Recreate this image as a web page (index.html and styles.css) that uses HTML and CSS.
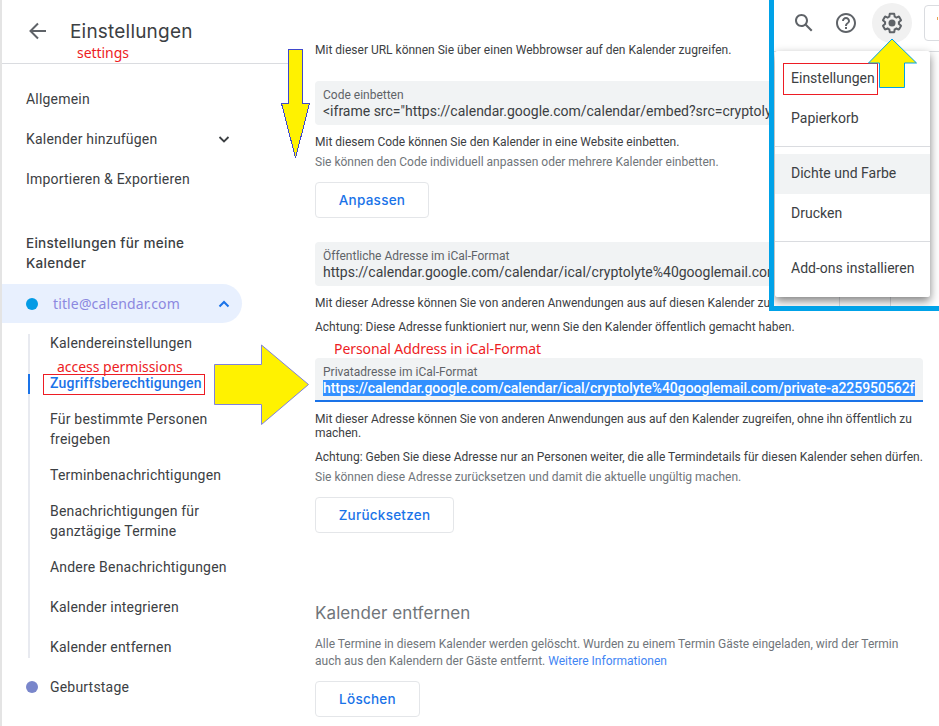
FILE: index.html
```html
<!DOCTYPE html>
<html lang="de">
<head>
<meta charset="utf-8">
<title>Einstellungen</title>
<link rel="stylesheet" href="styles.css">
</head>
<body>
<div class="app">
  <aside class="sidebar">
    <header class="top">
      <svg class="back" width="18" height="18" viewBox="0 0 18 18"><path d="M17 9H2M9 1.500L1.500 9L9 16.500" fill="none" stroke="#5f6368" stroke-width="2"/></svg>
      <div class="titles"><h1>Einstellungen</h1><span class="note settings">settings</span></div>
    </header>
    <nav>
      <a class="item">Allgemein</a>
      <a class="item">Kalender hinzufügen<svg class="chev" width="12" height="8" viewBox="0 0 12 8"><path d="M1.500 2L6 6.500L10.500 2" fill="none" stroke="#3c4043" stroke-width="1.800"/></svg></a>
      <a class="item">Importieren &amp; Exportieren</a>
      <h2>Einstellungen für meine Kalender</h2>
      <a class="item active"><i class="dot"></i><span>title@calendar.com</span><svg class="chev" width="12" height="8" viewBox="0 0 12 8"><path d="M1.500 6.500L6 2L10.500 6.500" fill="none" stroke="#1a73e8" stroke-width="2"/></svg></a>
      <div class="sub">
        <a>Kalendereinstellungen</a>
        <a class="current"><span class="w">Zugriffsberechtigungen</span><span class="note access">access permissions</span></a>
        <a>Für bestimmte Personen<br>freigeben</a>
        <a>Terminbenachrichtigungen</a>
        <a>Benachrichtigungen für<br>ganztägige Termine</a>
        <a>Andere Benachrichtigungen</a>
        <a>Kalender integrieren</a>
        <a>Kalender entfernen</a>
      </div>
      <a class="item other"><i class="dot violet"></i><span>Geburtstage</span></a>
    </nav>
  </aside>
  <main>
    <p class="first">Mit dieser URL können Sie über einen Webbrowser auf den Kalender zugreifen.</p>
    <div class="field"><label>Code einbetten</label><div class="value">&lt;iframe src="https://calendar.google.com/calendar/embed?src=cryptoly</div></div>
    <p class="after">Mit diesem Code können Sie den Kalender in eine Website einbetten.</p>
    <p class="hint">Sie können den Code individuell anpassen oder mehrere Kalender einbetten.</p>
    <button class="b1">Anpassen</button>
    <div class="field second"><label>Öffentliche Adresse im iCal-Format</label><div class="value">https://calendar.google.com/calendar/ical/cryptolyte%40googlemail.com</div></div>
    <p class="after">Mit dieser Adresse können Sie von anderen Anwendungen aus auf diesen Kalender zu</p>
    <p class="warn">Achtung: Diese Adresse funktioniert nur, wenn Sie den Kalender öffentlich gemacht haben.</p>
    <div class="note personal">Personal Address in iCal-Format</div>
    <div class="field focus"><label>Privatadresse im iCal-Format</label><div class="value"><span>https://calendar.google.com/calendar/ical/cryptolyte%40googlemail.com/private-a225950562f</span></div></div>
    <p class="after tight">Mit dieser Adresse können Sie von anderen Anwendungen aus auf den Kalender zugreifen, ohne ihn öffentlich zu<br>machen.</p>
    <p class="warn2">Achtung: Geben Sie diese Adresse nur an Personen weiter, die alle Termindetails für diesen Kalender sehen dürfen.</p>
    <p class="hint">Sie können diese Adresse zurücksetzen und damit die aktuelle ungültig machen.</p>
    <button class="b2">Zurücksetzen</button>
    <h3>Kalender entfernen</h3>
    <p class="remove">Alle Termine in diesem Kalender werden gelöscht. Wurden zu einem Termin Gäste eingeladen, wird der Termin<br>auch aus den Kalendern der Gäste entfernt. <a>Weitere Informationen</a></p>
    <button class="b3">Löschen</button>
  </main>

  <section class="inset">
    <div class="toolbar">
      <svg class="ic" width="24" height="24" viewBox="0 0 24 24"><path fill="#5f6368" d="M20.490 19l-5.730-5.730C15.530 12.200 16 10.910 16 9.500 16 5.910 13.090 3 9.500 3S3 5.910 3 9.500 5.910 16 9.500 16c1.410 0 2.700-.47 3.770-1.240L19 20.490 20.490 19zM5 9.500C5 7.010 7.010 5 9.500 5S14 7.010 14 9.500 11.990 14 9.500 14 5 11.990 5 9.500z"/></svg>
      <svg class="ic help" width="24" height="24" viewBox="0 0 24 24"><path fill="#5f6368" d="M11 18h2v-2h-2v2zm1-16C6.480 2 2 6.480 2 12s4.480 10 10 10 10-4.480 10-10S17.520 2 12 2zm0 18c-4.410 0-8-3.590-8-8s3.590-8 8-8 8 3.590 8 8-3.590 8-8 8zm0-14c-2.210 0-4 1.790-4 4h2c0-1.100.9-2 2-2s2 .9 2 2c0 2-3 1.750-3 5h2c0-2.250 3-2.500 3-5 0-2.210-1.790-4-4-4z"/></svg>
      <span class="gear"><svg width="24" height="24" viewBox="0 0 24 24"><path fill="#5f6368" d="M13.850 22.250h-3.700c-.74 0-1.360-.54-1.450-1.270l-.27-1.890c-.27-.14-.53-.29-.79-.46l-1.800.72c-.7.260-1.470-.03-1.810-.65L2.200 15.530c-.35-.66-.2-1.440.36-1.880l1.530-1.190c-.01-.15-.02-.3-.02-.46 0-.15.010-.31.020-.46l-1.520-1.190c-.59-.45-.74-1.260-.37-1.880l1.850-3.190c.34-.62 1.110-.9 1.790-.63l1.810.73c.26-.17.520-.32.780-.46l.27-1.910c.09-.7.710-1.250 1.440-1.250h3.700c.74 0 1.360.54 1.450 1.270l.27 1.890c.27.140.53.290.79.460l1.800-.72c.71-.26 1.480.03 1.820.65l1.840 3.180c.36.660.2 1.440-.36 1.880l-1.520 1.190c.01.150.02.300.02.460s-.01.310-.02.460l1.520 1.190c.56.450.72 1.230.37 1.860l-1.860 3.220c-.34.620-1.110.9-1.800.63l-1.800-.72c-.26.170-.52.320-.78.460l-.27 1.910c-.1.680-.72 1.220-1.460 1.220zm-3.230-2h2.760l.37-2.550.53-.22c.44-.18.880-.44 1.340-.78l.45-.34 2.380.96 1.380-2.400-2.030-1.580.07-.56c.03-.26.060-.51.060-.78s-.03-.53-.06-.78l-.07-.56 2.030-1.580-1.390-2.400-2.390.96-.45-.35c-.42-.32-.87-.58-1.330-.77l-.52-.22-.37-2.550h-2.760l-.37 2.550-.53.210c-.44.190-.88.440-1.340.79l-.45.330-2.380-.95-1.390 2.390 2.030 1.580-.07.560a7 7 0 0 0-.06.790c0 .26.020.53.060.78l.07.560-2.030 1.580 1.380 2.400 2.390-.96.45.35c.43.330.86.580 1.330.77l.53.220.38 2.550z"/><circle cx="12" cy="12" r="3.500" fill="#5f6368"/></svg></span>
      <span class="cut"></span>
    </div>
    <div class="menu">
      <a>Einstellungen</a><a>Papierkorb</a><hr>
      <a class="hover">Dichte und Farbe</a><a class="raised">Drucken</a><hr class="second-rule"><a class="raised">Add-ons installieren</a>
      <i class="redbox"></i>
    </div>
    <div class="grid"><i></i><i></i></div>
  </section>

  <svg class="arrow down" width="30" height="112" viewBox="0 0 30 112" shape-rendering="crispEdges"><path d="M7.500 .5H21.500V54.500H28.500L14.500 109L.5 54.500H7.500Z" fill="#fff200" stroke="#3f48cc"/></svg>
  <svg class="arrow right" width="97" height="83" viewBox="0 0 97 83"><path d="M.5 20.500H47.500V1L94.500 40.500L47.500 80.500V60.500H.5Z" fill="#fff200" stroke="#7f82dd"/></svg>
  <svg class="arrow up" width="50" height="51" viewBox="0 0 50 51"><path d="M24 1L48.500 25H36.500V49.500H11.500V25H.5Z" fill="#fff200" stroke="#00a2e8"/></svg>
</div>
</body>
</html>
```
FILE: styles.css
```css
*, *::before, *::after { box-sizing: border-box; }
body { margin: 0; background: #fff; font-family: Roboto, "Liberation Sans", sans-serif; color: #3c4043; }
.app { position: relative; display: flex; width: 939px; height: 726px; overflow: hidden; border-left: 2px solid #e4e4e4; }
h1, h2, h3, p { margin: 0; font-weight: 400; }
.note { color: #ed1c24; font: 14px/18px "Noto Sans", sans-serif; }

.sidebar { width: 313px; flex: none; }
.top { width: 287px; height: 64px; display: flex; border-bottom: 1px solid #dadce0; padding: 20px 0 0 27px; }
.back { margin-top: 2px; }
.titles { margin-left: 23px; display: flex; flex-direction: column; }
h1 { font: 400 19px/24px Inter, sans-serif; letter-spacing: .2px; }
.settings { margin-left: 7px; letter-spacing: -.05px; }
nav { padding-top: 15px; font-size: 14px; line-height: 20px; letter-spacing: .2px; }
.item { display: flex; align-items: center; height: 40px; width: 240px; padding-left: 24px; padding-right: 12px; }
.chev { margin-left: auto; }
h2 { font: 500 13.5px/20px Inter, sans-serif; width: 190px; margin: 34px 0 11px 24px; letter-spacing: .28px; }
.active { background: #e8f0fe; border-radius: 0 20px 20px 0; height: 39px; color: #8c88e0; font-family: "Noto Sans", sans-serif; letter-spacing: .13px; }
.dot { width: 12px; height: 12px; border-radius: 50%; background: #039be5; margin-right: 15px; }
.sub { position: relative; }
.sub::before { content: ""; position: absolute; left: 26px; top: 11px; bottom: 9px; width: 2px; background: #e8eaf0; }
.sub a { display: block; padding: 10px 0 10px 48px; }
.sub a:has(br) { padding-top: 6px; padding-bottom: 6px; }
.sub .current { position: relative; color: #1a73e8; font-weight: 500; }
.current::before { content: ""; position: absolute; left: 26px; top: 11px; width: 2px; height: 20px; background: #1a73e8; }
.current::after { content: ""; position: absolute; left: 41px; top: 11px; width: 162px; height: 21px; border: 1px solid #ed1c24; }
.access { position: absolute; left: 55px; top: -5px; letter-spacing: -.02px; }
.violet { background: #7986cb; margin-right: 12px; }

main { width: 608px; flex: none; font-size: 12px; line-height: 16px; }
.first { padding-top: 42px; margin-bottom: 23px; }
.field { height: 44px; background: #f1f3f4; border-radius: 4px; padding: 6px 8px 0; overflow: hidden; white-space: nowrap; }
.field label { display: block; height: 16px; color: #5f6368; }
.value { font-size: 14px; line-height: 17px; }
.after { margin-top: 9px; }
.hint { margin-top: 4px; color: #70757a; }
button { display: block; height: 36px; padding: 0; background: #fff; border: 1px solid #e4e6e9; border-radius: 4px; color: #1a73e8; font: 500 13.500px/20px Inter, sans-serif; letter-spacing: .25px; margin-top: 12px; }
.b1 { width: 114px; }
.second { margin-top: 24px; }
.warn { margin-top: 8px; }
.personal { margin: 5px 0 0 19px; height: 18px; line-height: 17px; letter-spacing: -.08px; }
.focus { border-bottom: 2px solid #1a73e8; border-radius: 4px 4px 0 0; }
.focus span { background: #3390ff; color: #fff; font-weight: 500; letter-spacing: -.045px; }
.tight { line-height: 14px; margin-top: 10px; }
.warn2 { margin-top: 9px; }
.b2 { width: 139px; }
h3 { font: 400 17px/24px Inter, sans-serif; color: #70757a; margin-top: 68px; letter-spacing: .08px; }
.remove { line-height: 17px; margin-top: 11px; color: #70757a; }
.remove a { color: #4285f4; }
.b3 { width: 105px; margin-top: 11px; }

.inset { position: absolute; left: 767px; top: 0; width: 170px; height: 311px; background: #fff; border: solid #00a2e8; border-width: 0 0 5px 5px; overflow: hidden; }
.toolbar { height: 52px; border-bottom: 1px solid #dadce0; display: flex; padding: 3px 0 0 18px; }
.ic { margin-top: 8px; flex: none; }
.help { margin-left: 18px; }
.gear { flex: none; width: 40px; height: 40px; margin-left: 14px; border-radius: 50%; background: #f1f1f1; display: grid; place-items: center; }
.cut { position: relative; flex: none; width: 50px; height: 36px; margin: 2px 0 0 12px; border: 1px solid #dadce0; border-radius: 4px; }
.cut::after { content: ""; position: absolute; left: 12px; top: 11px; width: 1px; height: 3px; background: #e8a04c; }
.menu { position: absolute; left: 1px; top: 51px; width: 155px; height: 246px; padding-top: 7px; background: #fff; border-radius: 2px; box-shadow: 0 4px 10px rgba(0,0,0,.5); font-size: 14px; line-height: 40px; }
.menu a { display: block; padding-left: 16px; height: 40px; letter-spacing: .01px; }
.menu hr { border: 0; height: 1px; background: #dadce0; margin: 8px 0 7px; }
.menu .second-rule { margin-top: 7px; }
.menu .hover { background: #f1f3f4; line-height: 38px; }
.menu .raised { line-height: 38px; }
.redbox { position: absolute; left: 8px; top: 12px; width: 95px; height: 32px; border: 1px solid #ed1c24; }
.grid { display: flex; gap: 50px; height: 260px; padding-left: 65px; }
.grid i { width: 1px; background: #dadce0; }
.arrow { position: absolute; }
.down { left: 279px; top: 49px; }
.right { left: 212px; top: 344px; }
.up { left: 866px; top: 38px; }
```
